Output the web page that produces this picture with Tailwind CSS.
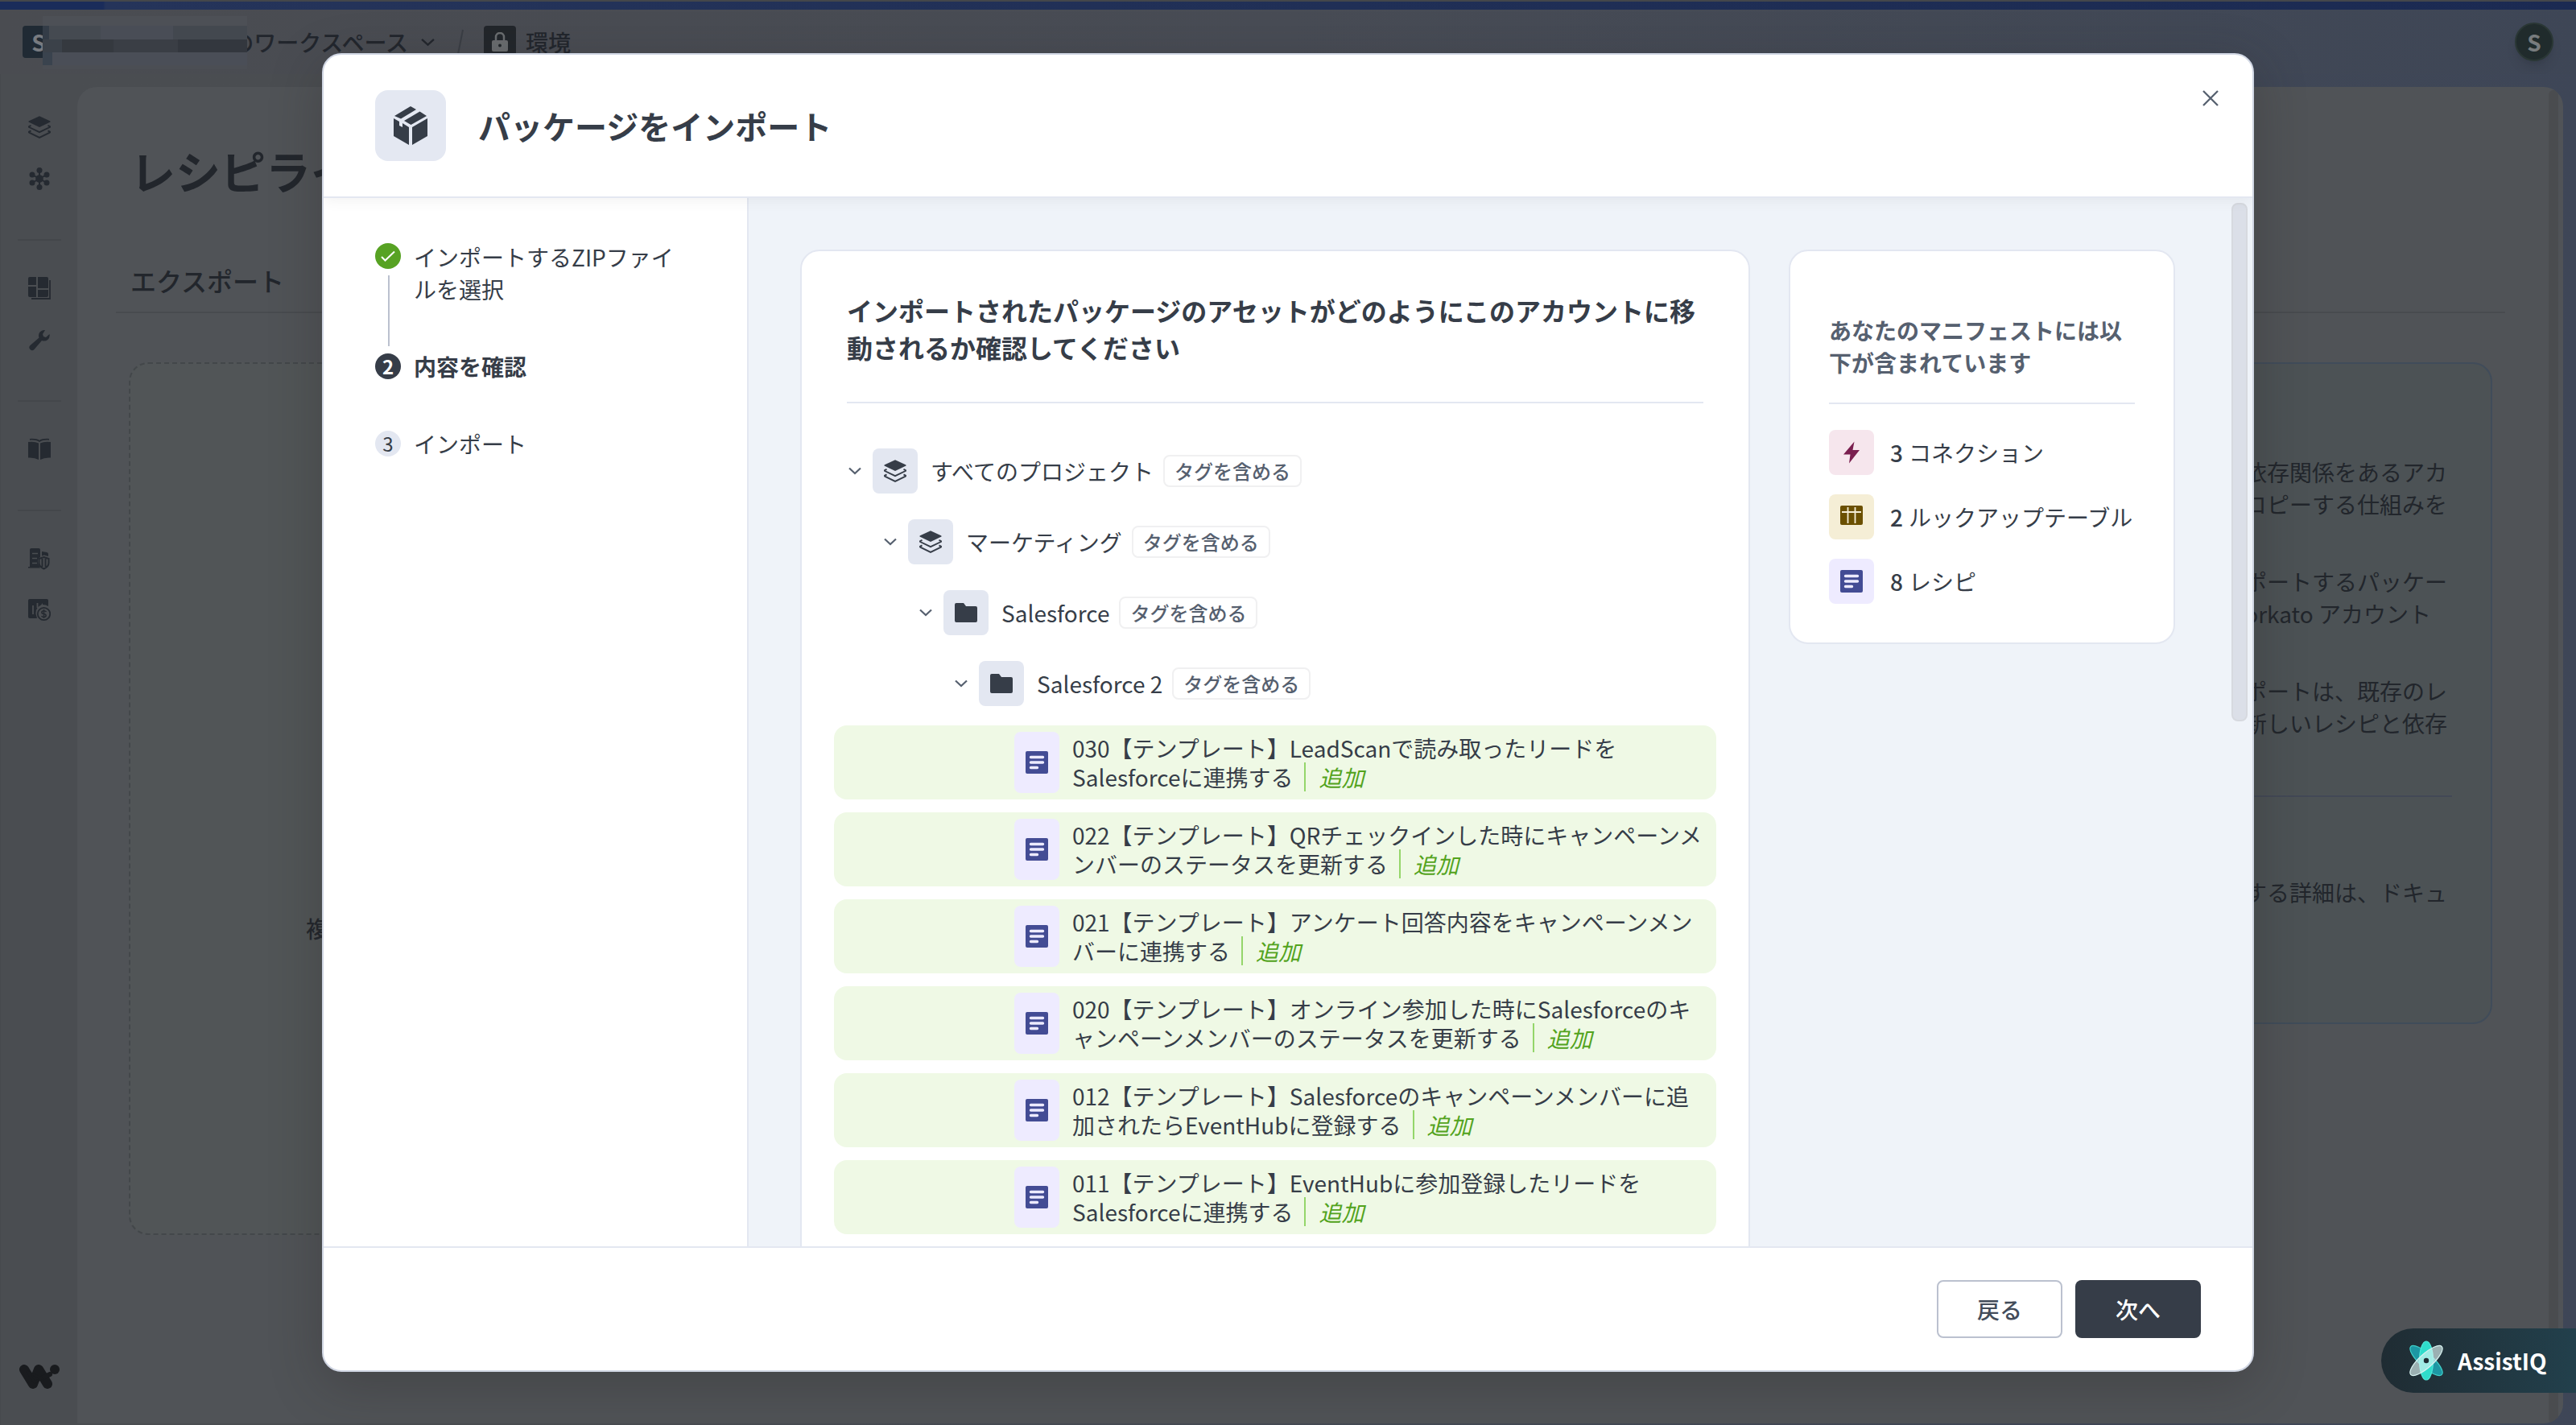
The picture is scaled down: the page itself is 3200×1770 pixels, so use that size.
<!DOCTYPE html>
<html lang="ja">
<head>
  <meta charset="UTF-8" />
  <title>パッケージをインポート</title>
  <script src="https://cdn.jsdelivr.net/npm/@tailwindcss/browser@4"></script>
</head>
<body class="font-['Noto_Sans_CJK_JP','Noto_Sans',sans-serif] bg-[#4a4d51] text-[#363d48] text-[28px] leading-10 whitespace-nowrap">

  <!-- icons -->
  <svg class="hidden">
    <symbol id="layers" viewBox="0 0 28 28">
      <path d="M14 .3 27 6.2q1.3.8 0 1.6L14 14 1 7.800q-1.300-.8 0-1.600z" fill="currentColor" />
      <path d="M3.500 11.800 1.200 13q-.7.500 0 1L14 20.200 26.800 14q.7-.5 0-1l-2.300-1.200M3.500 18.300l-2.300 1.300q-.7.500 0 1L14 26.900l12.800-6.300q.7-.5 0-1l-2.300-1.300" fill="none" stroke="currentColor" stroke-width="1.900" />
    </symbol>
    <symbol id="folder" viewBox="0 0 28 28">
      <path d="M0 4q0-2 2-2h9l3 4h12q2 0 2 2v16q0 2-2 2H2q-2 0-2-2z" fill="currentColor" />
    </symbol>
    <symbol id="recipe" viewBox="0 0 28 28">
      <rect width="28" height="28" rx="2" fill="#434c94" />
      <path d="M6.500 7.500h15M6.500 14h15M6.500 20.500h8" stroke="#edebff" stroke-width="3.400" stroke-linecap="round" />
    </symbol>
    <symbol id="chevron" viewBox="0 0 16 10">
      <path d="m1 1.500 7 6.500 7-6.500" fill="none" stroke="currentColor" stroke-width="2.200" />
    </symbol>
  </svg>

  <div class="w-[3200px] h-[1770px] relative overflow-hidden flex flex-col">
    <div class="h-3 shrink-0 bg-linear-to-r from-[#1a2c5a] from-[4%] via-[#25345a] via-[4.100%] to-[#1b2a52] border-t-2 border-[#44474b]"></div>

    <header class="h-20 shrink-0 bg-linear-to-r from-[#4a4c51] via-[#484c55] to-[#3e4656] flex items-center pl-7 pr-7 text-[#22262d]">
      <div class="w-10 h-10 rounded bg-[#202a34] text-[#787b80] font-bold text-center">S</div>
      <div class="relative w-[220px] h-10 shrink-0">
        <div class="absolute left-[-15px] top-[-12px] w-[254px] h-[66px] bg-[#4b4e54] flex flex-col">
          <div class="h-3 bg-[#4d5056]"></div>
          <div class="h-[17px] flex"><i class="w-2 bg-[#333c47]"></i><i class="w-16 bg-[#454a51]"></i><i class="w-[90px] bg-[#494d56]"></i><i class="flex-1 bg-[#43484f]"></i></div>
          <div class="h-4 flex"><i class="w-6 bg-[#3b4149]"></i><i class="w-16 bg-[#35393f]"></i><i class="w-20 bg-[#3a3e45]"></i><i class="flex-1 bg-[#33373e]"></i></div>
          <div class="h-4 flex"><i class="w-3 bg-[#3a434e]"></i><i class="flex-1 bg-[#4a4e57]"></i></div>
        </div>
      </div>
      <div class="w-[218px] shrink-0 overflow-hidden flex justify-end font-medium ml-[1px]">のワークスペース</div>
      <svg class="w-[17px] h-[11px] ml-4" viewBox="0 0 16 10"><use href="#chevron" /></svg>
      <svg class="w-2 h-8 ml-[28px] text-[#3a3e45]" viewBox="0 0 8 32"><path d="M7 1 1 31" stroke="currentColor" stroke-width="2" /></svg>
      <div class="w-10 h-10 rounded bg-[#22262b] ml-[25px] flex items-center justify-center text-[#6a6d70]">
        <svg class="w-5 h-6" viewBox="0 0 20 24"><rect y="10" width="20" height="14" rx="2" fill="currentColor" /><path d="M5 11V6a5 5 0 0 1 10 0v5" fill="none" stroke="currentColor" stroke-width="2.500" /><circle cx="10" cy="16.500" r="2" fill="#22262b" /></svg>
      </div>
      <span class="ml-3 font-medium">環境</span>
      <div class="ml-auto w-12 h-12 rounded-full bg-[#202b2c] border-2 border-[#2a3735] flex items-center justify-center font-bold text-[#787c7e] shadow-lg">S</div>
    </header>

    <div class="flex-1 flex min-h-0 bg-linear-to-r from-[#4a4d51] from-20% to-[#3e4657] pr-4">
      <aside class="w-24 shrink-0 bg-[#4a4d51] pt-[34px] flex flex-col items-center text-[#252a31] border-l border-[#46494d]">
        <div class="h-16 flex items-center"><svg class="w-7 h-7"><use href="#layers" /></svg></div>
        <div class="h-16 flex items-center">
          <svg class="w-7 h-7" viewBox="0 0 28 28" fill="currentColor">
            <path d="M14 3v22M5 9l18 10M23 9 5 19" stroke="currentColor" stroke-width="2" />
            <circle cx="14" cy="14" r="4.800" /><circle cx="14" cy="3.500" r="3.500" /><circle cx="14" cy="24.500" r="3.500" /><circle cx="5" cy="9" r="3.500" /><circle cx="23" cy="9" r="3.500" /><circle cx="5" cy="19" r="3.500" /><circle cx="23" cy="19" r="3.500" />
          </svg>
        </div>
        <div class="w-[54px] h-[2px] bg-[#44474b] mt-[43px] mb-[27px]"></div>
        <div class="h-16 flex items-center">
          <svg class="w-7 h-7" viewBox="0 0 28 28" fill="currentColor">
            <path d="M2 0h8v10H0V2q0-2 2-2zM12 0h11q2 0 2 2v12H12zM0 12h10v13H2q-2 0-2-2zM12 16h13v7q0 2-2 2H12z" />
            <path d="M27 4v23H4" fill="none" stroke="currentColor" stroke-width="1.800" />
          </svg>
        </div>
        <div class="h-16 flex items-center">
          <svg class="w-7 h-7" viewBox="0 0 28 28" fill="currentColor"><path d="M21 2a7 7 0 0 0-7.500 9.500L2.500 21a3.500 3.500 0 1 0 5 5l9.500-11a7 7 0 0 0 9.500-8l-4.500 4-3-1-1-3z" /></svg>
        </div>
        <div class="w-[54px] h-[2px] bg-[#44474b] mt-[43px] mb-[27px]"></div>
        <div class="h-16 flex items-center">
          <svg class="w-7 h-7" viewBox="0 0 28 28" fill="currentColor"><path d="M0 5q8-1 13 1.500V27Q8 24 0 24.500zM28 5q-8-1-13 1.500V27q5-3 13-2.500z" /><path d="M2 1.800q8-.5 12 2.200 4-2.700 12-2.200" fill="none" stroke="currentColor" stroke-width="1.800" /></svg>
        </div>
        <div class="w-[54px] h-[2px] bg-[#44474b] mt-[43px] mb-[27px]"></div>
        <div class="h-16 flex items-center">
          <svg class="w-7 h-7" viewBox="0 0 28 28" fill="currentColor">
            <path d="M2 3q0-2 2-2h9q2 0 2 2v9q-3 1-3 5t3 8.500H0V24h2zM17 5l6 1q2 .3 2 2v3l-5-1.500-3 1z" />
            <path d="M5 7.500h7M5 13.500h6M5 19.500h6" stroke="#4a4d51" stroke-width="1.500" />
            <path d="m19.500 12 6 2v5q0 5-6 7.500-6-2.500-6-7.500v-5zM17.500 14v10M21.500 14v10" fill="none" stroke="currentColor" stroke-width="2" />
          </svg>
        </div>
        <div class="h-16 flex items-center">
          <svg class="w-7 h-7" viewBox="0 0 28 28" fill="currentColor">
            <path d="M2 0h21q2 0 2 2v7q-3-2-7-2V5l-2 2.500q-7 3-6.500 11L11 24H2q-2 0-2-2V2q0-2 2-2z" /><path d="M6 8v11M11.500 5v6" stroke="#4a4d51" stroke-width="1.800" />
            <circle cx="19.500" cy="18.500" r="7.700" fill="none" stroke="currentColor" stroke-width="1.800" />
            <path d="M22.500 16q-1-1.300-3-1.300-2.700 0-2.700 1.800t2.700 2 2.700 2q0 1.900-2.700 1.900-2 0-3-1.300M19.500 13v11" fill="none" stroke="currentColor" stroke-width="1.500" />
          </svg>
        </div>
        <svg class="w-[50px] h-[30px] mt-auto mb-[45px] text-[#191b1e]" viewBox="0 0 50 30" fill="none" stroke="currentColor" stroke-width="12" stroke-linecap="round" stroke-linejoin="round">
          <path d="m6 6 11 18 7-18 11 18" /><path d="m30 16 8-4" stroke-width="6" /><path d="m10 9 18 8-9 5z" stroke-width="3" fill="currentColor" /><circle cx="44" cy="6" r="6" fill="currentColor" stroke="none" />
        </svg>
      </aside>

      <main class="flex-1 mt-4 mb-[2px] bg-[#505357] rounded-t-3xl rounded-br-3xl flex text-[#22262c] overflow-hidden">
        <div class="flex-1">
          <h1 class="text-[56px] leading-[64px] font-bold pl-[66px] pt-[71px]">レシピライフサイクル管理</h1>
          <div class="mt-[36px] ml-12 w-[2968px] h-[110px] pt-[49px] pl-[18px] border-b-2 border-[#484b4f] text-[32px] font-medium">エクスポート</div>
          <div class="flex justify-between mt-[61px] pl-16 w-[3000px]">
            <div class="w-[1500px] h-[1084px] border-2 border-dashed border-[#43474a] rounded-3xl bg-[#515557] pt-[681px] pl-[218px] font-medium">複数のアセットをエクスポート</div>
            <div class="w-[700px] h-[822px] border-2 border-[#404c5a] rounded-3xl bg-[#4c5255] text-right pr-[54px] pt-[114px]">
              <p>依存関係をあるアカ</p>
              <p>コピーする仕組みを</p>
              <p class="mt-14">ポートするパッケー</p>
              <p class="pr-5">Workato アカウント</p>
              <p class="mt-14">ポートは、既存のレ</p>
              <p>新しいレシピと依存</p>
              <div class="h-[2px] bg-[#424856] mt-[70px] -mr-[6px]"></div>
              <p class="mt-[98px]">する詳細は、ドキュ</p>
            </div>
          </div>
        </div>
        <div class="w-3 mr-[6px] mt-1 bg-[#4a4c4f] rounded-full shrink-0"></div>
      </main>
    </div>

    <!-- import dialog -->
    <div class="absolute left-[400px] top-[66px] w-[2400px] h-[1638px] bg-white border-2 border-[#d0d6e3] rounded-3xl flex flex-col overflow-hidden shadow-[0_16px_64px_rgba(40,36,32,0.3)]">
      <div class="h-[178px] shrink-0 border-b-2 border-[#e3e7f1] pl-16 pr-[42px] flex items-center relative z-10 shadow-[0_4px_16px_rgba(0,0,0,0.05)]">
        <div class="w-[88px] h-[88px] rounded-2xl bg-[#e4e8f2] flex items-center justify-center">
          <svg class="w-[42px] h-12" viewBox="0 0 42 48" fill="#363d48">
            <path d="M1 12 21 0l7 4L9 15.500zM13 18 32.500 6.500 41 12 21.500 23zM0 15l7 4v5l4 2v-5l8 5v22L0 37zM42 15v22L23 48V26z" />
          </svg>
        </div>
        <h2 class="ml-10 text-[40px] font-bold leading-[56px]">パッケージをインポート</h2>
        <svg class="w-5 h-5 ml-auto mb-[68px] text-[#56617a]" viewBox="0 0 20 20"><path d="m1 1 18 18M19 1 1 19" stroke="#56606f" stroke-width="2.300" /></svg>
      </div>

      <div class="flex-1 flex min-h-0">
        <div class="w-[528px] shrink-0 border-r-2 border-[#e3e7f1] pl-16 pt-[53px]">
          <div class="flex gap-4">
            <div class="w-8 flex flex-col items-center gap-2 pt-[3px]">
              <div class="w-8 h-8 rounded-full bg-[#57a223] flex items-center justify-center shrink-0"><svg class="w-[18px] h-[14px]" viewBox="0 0 18 14"><path d="m1 8 4.500 4.500L17 1.500" fill="none" stroke="#fff" stroke-width="2" /></svg></div>
              <div class="w-[2px] h-[88px] bg-[#bbc1cf] ml-[2px]"></div>
            </div>
            <div>インポートするZIPファイ<br>ルを選択</div>
          </div>
          <div class="flex gap-4 items-center mt-[5px] font-bold"><span class="w-8 h-8 rounded-full bg-[#363d48] text-white text-[24px] leading-8 text-center">2</span>内容を確認</div>
          <div class="flex gap-4 items-center mt-14"><span class="w-8 h-8 rounded-full bg-[#e3e7f1] text-[24px] leading-8 text-center">3</span>インポート</div>
        </div>

        <div class="flex-1 bg-[#eff3f9] flex items-start pl-16 pt-16 pr-[6px] overflow-hidden">
          <div class="w-[1180px] h-[1500px] shrink-0 bg-white border-2 border-[#e3e7f1] rounded-3xl pt-[50px] px-10">
            <div class="px-4">
              <h3 class="text-[32px] leading-[46px] font-bold">インポートされたパッケージのアセットがどのようにこのアカウントに移<br>動されるか確認してください</h3>
              <div class="h-[2px] bg-[#e3e7f1] mt-[45px] mb-14"></div>
            </div>
            <div class="flex flex-col gap-8 pl-[18px]">
              <div class="flex items-center h-14">
                <svg class="w-4 h-[10px] mr-[14px] text-[#56606f]"><use href="#chevron" /></svg>
                <span class="w-14 h-14 rounded-lg bg-[#e3e7f1] flex items-center justify-center mr-4"><svg class="w-7 h-7"><use href="#layers" /></svg></span>
                すべてのプロジェクト
                <span class="ml-3 h-10 px-3 border-2 border-[#f0f0f1] rounded-lg text-[24px] leading-9 font-medium text-[#56606f]">タグを含める</span>
              </div>
              <div class="flex items-center h-14 pl-11">
                <svg class="w-4 h-[10px] mr-[14px] text-[#56606f]"><use href="#chevron" /></svg>
                <span class="w-14 h-14 rounded-lg bg-[#e3e7f1] flex items-center justify-center mr-4"><svg class="w-7 h-7"><use href="#layers" /></svg></span>
                マーケティング
                <span class="ml-3 h-10 px-3 border-2 border-[#f0f0f1] rounded-lg text-[24px] leading-9 font-medium text-[#56606f]">タグを含める</span>
              </div>
              <div class="flex items-center h-14 pl-[88px]">
                <svg class="w-4 h-[10px] mr-[14px] text-[#56606f]"><use href="#chevron" /></svg>
                <span class="w-14 h-14 rounded-lg bg-[#e3e7f1] flex items-center justify-center mr-4"><svg class="w-7 h-7"><use href="#folder" /></svg></span>
                Salesforce
                <span class="ml-3 h-10 px-3 border-2 border-[#f0f0f1] rounded-lg text-[24px] leading-9 font-medium text-[#56606f]">タグを含める</span>
              </div>
              <div class="flex items-center h-14 pl-[132px]">
                <svg class="w-4 h-[10px] mr-[14px] text-[#56606f]"><use href="#chevron" /></svg>
                <span class="w-14 h-14 rounded-lg bg-[#e3e7f1] flex items-center justify-center mr-4"><svg class="w-7 h-7"><use href="#folder" /></svg></span>
                Salesforce 2
                <span class="ml-3 h-10 px-3 border-2 border-[#f0f0f1] rounded-lg text-[24px] leading-9 font-medium text-[#56606f]">タグを含める</span>
              </div>
            </div>
            <div id="recipes" class="flex flex-col gap-4 mt-6"></div>
          </div>

          <div class="w-[480px] h-[490px] shrink-0 ml-12 bg-white border-2 border-[#e3e7f1] rounded-3xl px-12 pt-[78px]">
            <h4 class="font-bold text-[#56606f]">あなたのマニフェストには以<br>下が含まれています</h4>
            <div class="h-[2px] bg-[#e3e7f1] mt-[30px] mb-8"></div>
            <div class="flex flex-col gap-6">
              <div class="flex items-center h-14">
                <span class="w-14 h-14 rounded-lg bg-[#f6e6ed] flex items-center justify-center mr-5"><svg class="w-5 h-7" viewBox="0 0 20 28"><path d="M13.500.5 0 16.500h8.500L7 27.500 20 11h-8.500z" fill="#7a1f4f" /></svg></span>
                <b class="font-medium mr-[7px]">3</b>コネクション
              </div>
              <div class="flex items-center h-14">
                <span class="w-14 h-14 rounded-lg bg-[#f5eed6] flex items-center justify-center mr-5"><svg class="w-7 h-6 mb-1" viewBox="0 0 28 24"><rect width="28" height="24" rx="2" fill="#6b5000" /><path d="M2 8h24M9.500 2v20M18.500 2v20" stroke="#f5eed6" stroke-width="1.800" /></svg></span>
                <b class="font-medium mr-[7px]">2</b>ルックアップテーブル
              </div>
              <div class="flex items-center h-14">
                <span class="w-14 h-14 rounded-lg bg-[#eeebff] flex items-center justify-center mr-5"><svg class="w-7 h-7"><use href="#recipe" /></svg></span>
                <b class="font-medium mr-[7px]">8</b>レシピ
              </div>
            </div>
          </div>
          <div class="w-5 h-[644px] shrink-0 ml-auto -mt-[58px] rounded-lg bg-[#dbdfe8] border-2 border-[#d6d9df]"></div>
        </div>
      </div>

      <div class="h-[154px] shrink-0 border-t-2 border-[#e3e7f1] flex items-center justify-end gap-4 pr-16">
        <button class="w-[156px] h-[72px] rounded-lg border-2 border-[#bbc1cf] font-medium text-[#434c5a]">戻る</button>
        <button class="w-[156px] h-[72px] rounded-lg bg-[#363d48] font-medium text-white">次へ</button>
      </div>
    </div>

    <!-- assistant launcher -->
    <div class="absolute right-0 top-[1650px] w-[242px] h-20 rounded-l-[40px] bg-linear-to-r from-[#1f2c33] to-[#22404c] flex items-center pl-[33px] text-white font-bold">
      <svg class="w-[46px] h-[50px] mr-[16px]" viewBox="0 0 46 50">
        <ellipse cx="23" cy="25" rx="26" ry="8.500" transform="rotate(42 23 25)" fill="#1d97a3" stroke="#3fd0c9" stroke-width="1.200" />
        <ellipse cx="23" cy="25" rx="8.500" ry="24" fill="#2fdccb" stroke="#4fe8da" stroke-width="1.200" />
        <ellipse cx="23" cy="25" rx="26" ry="8.500" transform="rotate(-42 23 25)" fill="#ddf5f3" fill-opacity=".65" stroke="#d8f3f1" stroke-width="1.200" />
        <circle cx="23" cy="25" r="3.200" fill="#1f2c33" />
      </svg>
      AssistIQ
    </div>
  </div>

  <script>
    const recipes = [
      ["030【テンプレート】LeadScanで読み取ったリードを", "Salesforceに連携する"],
      ["022【テンプレート】QRチェックインした時にキャンペーンメ", "ンバーのステータスを更新する"],
      ["021【テンプレート】アンケート回答内容をキャンペーンメン", "バーに連携する"],
      ["020【テンプレート】オンライン参加した時にSalesforceのキ", "ャンペーンメンバーのステータスを更新する"],
      ["012【テンプレート】Salesforceのキャンペーンメンバーに追", "加されたらEventHubに登録する"],
      ["011【テンプレート】EventHubに参加登録したリードを", "Salesforceに連携する"],
    ];

    document.getElementById("recipes").innerHTML = recipes.map(([first, second]) => `
      <div class="h-[92px] rounded-2xl bg-[#eff9e5] flex items-center pl-[224px]">
        <span class="w-14 h-[76px] shrink-0 rounded-lg bg-[#eeebff] flex items-center justify-center mr-4"><svg class="w-7 h-7"><use href="#recipe" /></svg></span>
        <div class="leading-9">
          <div>${first}</div>
          <div class="flex">${second}<span class="ml-[14px] pl-4 border-l-2 border-[#94d66a] text-[#53a31d] italic">追加</span></div>
        </div>
      </div>`).join("");
  </script>
</body>
</html>
